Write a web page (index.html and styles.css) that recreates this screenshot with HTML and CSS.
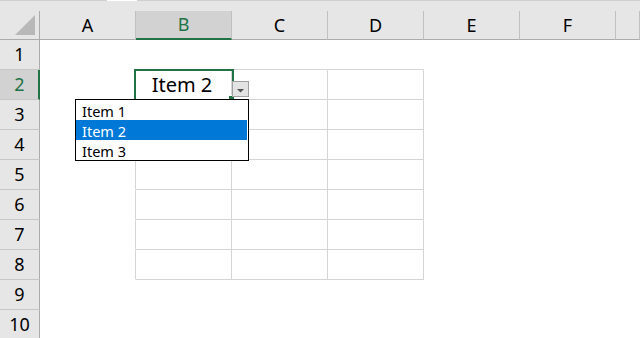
FILE: index.html
```html
<!DOCTYPE html>
<html>
<head>
<meta charset="utf-8">
<link rel="stylesheet" href="styles.css">
</head>
<body>
<div class="sheet">
  <div class="strip"><span class="s1"></span><span class="s2"></span><span class="s3"></span></div>

  <div class="corner"><svg width="39" height="28" viewBox="0 0 39 28"><polygon points="15,24 35,24 35,4" fill="#b8b8b8"/></svg></div>
  <div class="ch">A</div>
  <div class="ch sel">B</div>
  <div class="ch">C</div>
  <div class="ch">D</div>
  <div class="ch">E</div>
  <div class="ch">F</div>
  <div class="ch"></div>

  <div class="rh">1</div>
  <div class="c"></div><div class="c gb"></div><div class="c gb"></div><div class="c gb"></div><div class="c"></div><div class="c"></div><div class="c"></div>

  <div class="rh sel">2</div>
  <div class="c gr"></div>
  <div class="c gr gb active">Item 2
    <div class="selbox"><span class="handle"></span></div>
    <div class="ddbtn"><svg width="15" height="14" viewBox="0 0 15 14"><polygon points="4,7 11,7 7.5,10.5" fill="#555"/></svg></div>
    <div class="list">
      <div class="item">Item 1</div>
      <div class="item hi">Item 2</div>
      <div class="item">Item 3</div>
    </div>
  </div>
  <div class="c gr gb"></div><div class="c gr gb"></div><div class="c"></div><div class="c"></div><div class="c"></div>

  <div class="rh">3</div>
  <div class="c gr"></div><div class="c gr gb"></div><div class="c gr gb"></div><div class="c gr gb"></div><div class="c"></div><div class="c"></div><div class="c"></div>

  <div class="rh">4</div>
  <div class="c gr"></div><div class="c gr gb"></div><div class="c gr gb"></div><div class="c gr gb"></div><div class="c"></div><div class="c"></div><div class="c"></div>

  <div class="rh">5</div>
  <div class="c gr"></div><div class="c gr gb"></div><div class="c gr gb"></div><div class="c gr gb"></div><div class="c"></div><div class="c"></div><div class="c"></div>

  <div class="rh">6</div>
  <div class="c gr"></div><div class="c gr gb"></div><div class="c gr gb"></div><div class="c gr gb"></div><div class="c"></div><div class="c"></div><div class="c"></div>

  <div class="rh">7</div>
  <div class="c gr"></div><div class="c gr gb"></div><div class="c gr gb"></div><div class="c gr gb"></div><div class="c"></div><div class="c"></div><div class="c"></div>

  <div class="rh">8</div>
  <div class="c gr"></div><div class="c gr gb"></div><div class="c gr gb"></div><div class="c gr gb"></div><div class="c"></div><div class="c"></div><div class="c"></div>

  <div class="rh">9</div>
  <div class="c"></div><div class="c"></div><div class="c"></div><div class="c"></div><div class="c"></div><div class="c"></div><div class="c"></div>

  <div class="rh">10</div>
  <div class="c"></div><div class="c"></div><div class="c"></div><div class="c"></div><div class="c"></div><div class="c"></div><div class="c"></div>
</div>
</body>
</html>
```

FILE: styles.css
```css
html, body {
  margin: 0;
  padding: 0;
  background: #ffffff;
  overflow: hidden;
}
body {
  width: 640px;
  height: 338px;
  font-family: "Noto Sans", "Open Sans", sans-serif;
  color: #000;
}
.sheet {
  display: grid;
  grid-template-columns: 40px repeat(6, 96px) 24px;
  grid-template-rows: 11px 29px repeat(10, 30px);
  height: 338px;
  overflow: hidden;
}
.strip {
  grid-column: 1 / -1;
  background: #e6e6e6;
  display: flex;
  align-items: flex-start;
}
.strip span {
  height: 1px;
  display: block;
}
.strip .s1 { width: 107px; background: #d0d0d0; }
.strip .s2 { width: 30px; background: #ffffff; }
.strip .s3 { flex: 1; background: #d0d0d0; }

.corner, .ch {
  box-sizing: border-box;
  background: #e6e6e6;
  border-right: 1px solid #c0c0c0;
  border-bottom: 1px solid #ababab;
  font-size: 18px;
  line-height: 28px;
  text-align: center;
}
.corner {
  border-right-color: #ababab;
}
.corner svg { display: block; }
.ch.sel {
  background: #d2d2d2;
  color: #217346;
  border-bottom: 2px solid #217346;
  line-height: 27px;
}
.rh {
  box-sizing: border-box;
  background: #e6e6e6;
  border-right: 1px solid #ababab;
  border-bottom: 1px solid #c6c6c6;
  font-size: 18px;
  line-height: 29px;
  text-align: center;
}
.rh.sel {
  background: #d2d2d2;
  color: #217346;
  border-right: 2px solid #217346;
  padding-left: 1px;
}
.c {
  box-sizing: border-box;
  border-right: 1px solid transparent;
  border-bottom: 1px solid transparent;
}
.c.gr { border-right-color: #d4d4d4; }
.c.gb { border-bottom-color: #d4d4d4; }

.active {
  position: relative;
  font-size: 20px;
  line-height: 29px;
  text-align: center;
  padding-right: 3px;
}
.selbox {
  position: absolute;
  left: -2px;
  top: -1px;
  width: 100px;
  height: 32px;
  box-sizing: border-box;
  border: 2px solid #217346;
  z-index: 2;
}
.handle {
  position: absolute;
  right: -3px;
  bottom: -3px;
  width: 5px;
  height: 5px;
  background: #217346;
  border: 1px solid #fff;
}
.ddbtn {
  position: absolute;
  left: 96px;
  top: 11px;
  width: 17px;
  height: 16px;
  box-sizing: border-box;
  border: 1px solid #a0a0a0;
  background: #e3e3e3;
  z-index: 3;
}
.ddbtn svg { display: block; }
.list {
  position: absolute;
  left: -61px;
  top: 29px;
  width: 174px;
  box-sizing: border-box;
  border: 1px solid #000;
  background: #fff;
  padding-right: 1px;
  z-index: 4;
  text-align: left;
}
.item {
  height: 20px;
  font-size: 14.5px;
  line-height: 22px;
  padding-left: 6px;
  color: #000;
  overflow: hidden;
}
.item.hi {
  background: #0078d7;
  color: #fff;
}
```
